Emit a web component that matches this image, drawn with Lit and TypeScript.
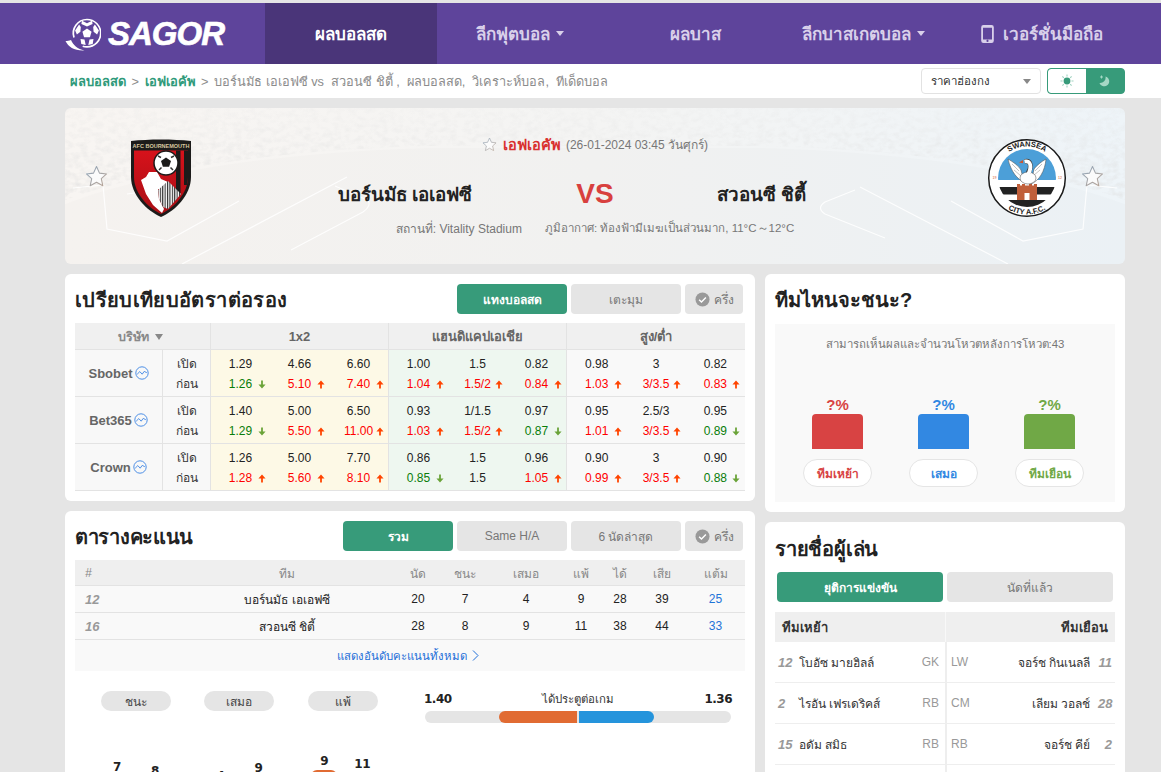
import { LitElement, html, css, svg } from "lit";
import { customElement } from "lit/decorators.js";

type Odd = [string, ("u" | "d" | "")?];
const parse = (s: string): Odd[] => s.split(" ").map((t) => {
  const m = t.slice(-1);
  return m === "u" || m === "d" ? [t.slice(0, -1), m] : [t, ""];
});
const ODDS = [
  { name: "Sbobet", open: "1.29 4.66 6.60|1.00 1.5 0.82|0.98 3 0.82", now: "1.26d 5.10u 7.40u|1.04u 1.5/2u 0.84u|1.03u 3/3.5u 0.83u" },
  { name: "Bet365", open: "1.40 5.00 6.50|0.93 1/1.5 0.97|0.95 2.5/3 0.95", now: "1.29d 5.50u 11.00u|1.03u 1.5/2u 0.87d|1.01u 3/3.5u 0.89d" },
  { name: "Crown", open: "1.26 5.00 7.70|0.86 1.5 0.96|0.90 3 0.90", now: "1.28u 5.60u 8.10u|0.85d 1.5 1.05u|0.99u 3/3.5u 0.88d" },
];
const GROUP_CLASS = ["g1", "g2", "g3"];
const STAND_HEAD = ["#", "ทีม", "นัด", "ชนะ", "เสมอ", "แพ้", "ได้", "เสีย", "แต้ม"];
const STAND = [
  ["12", "บอร์นมัธ เอเอฟซี", "20", "7", "4", "9", "28", "39", "25"],
  ["16", "สวอนซี ชิตี้", "28", "8", "9", "11", "38", "44", "33"],
];
const CHART = [
  { label: "ชนะ", a: 7, b: 8 },
  { label: "เสมอ", a: 4, b: 9 },
  { label: "แพ้", a: 9, b: 11 },
];
const PLAYERS = [
  ["12", "โบอัซ มายฮิลล์", "GK", "LW", "จอร์ช กินเนลลี", "11"],
  ["2", "ไรอัน เฟรเดริคส์", "RB", "CM", "เลียม วอลช์", "28"],
  ["15", "อดัม สมิธ", "RB", "RB", "จอร์ช คีย์", "2"],
  ["", "", "", "", "", ""],
];

const star = (cls: string) => html`<svg class=${cls} viewBox="0 0 24 24"><defs><linearGradient id="sg" x1="0" y1="0" x2="1" y2="1"><stop offset="0" stop-color="#8fa6bc"/><stop offset="1" stop-color="#b9a494"/></linearGradient></defs><path d="M12 1.6l3.1 6.900 7.400.8-5.500 5 1.600 7.400L12 18l-6.600 3.700L7 14.300l-5.500-5 7.400-.8z" fill="#fbfbfb" stroke="url(#sg)" stroke-width="1.100" stroke-linejoin="round"/></svg>`;
const check = html`<svg class="chk" viewBox="0 0 16 16"><circle cx="8" cy="8" r="7.500" fill="#999"/><path d="M4.400 8.200l2.500 2.400 4.700-4.800" fill="none" stroke="#fff" stroke-width="1.500"/></svg>`;
const trend = html`<svg class="trend" viewBox="0 0 14 14"><circle cx="7" cy="7" r="6.200" fill="none" stroke="#4d8fe6" stroke-width="1"/><path d="M2.200 8.200l2.600-2.600 2.400 2.600 2-2.800 2.600 1.300" fill="none" stroke="#4d8fe6" stroke-width="1"/></svg>`;
const arrow = (d: string) => html`<svg class="arr ${d}" viewBox="0 0 9 10">${d === "u"
  ? svg`<path d="M4.500 0.500L8.500 5H5.500v4.500h-2V5H.5z" fill="#ff4400"/>`
  : svg`<path d="M4.500 9.500L8.500 5H5.500V.5h-2V5H.5z" fill="#6aa338"/>`}</svg>`;

const logoBall = html`<svg class="ball" viewBox="0 0 36 33">
  <path d="M22 1.500a13.700 13.700 0 0 1 0 27.400c-1.500 0-3-.2-4.300-.7" fill="none" stroke="#fff" stroke-width="1.700"/>
  <path d="M22 1.500A13.700 13.700 0 0 0 9 19.500" fill="none" stroke="#fff" stroke-width="1.700"/>
  <path d="M22 10.500l4.600 3.300-1.700 5.400h-5.800l-1.700-5.400z" fill="#fff"/>
  <path d="M17 2.800l5 2.400 5-2.400 .6 3.200-5.600 2.600-5.600-2.600zM29.900 6.600l4 6-1.800 3.800-3.500-2.700-.4-4.600zM14.100 6.600l-4 6 1.800 3.800 3.500-2.700.4-4.600zM15.500 21l4 .6 1.200 5.400-4.400-1zM28.500 21l-4 .6-1.200 5.400 4.400-1z" fill="#fff"/>
  <path d="M.5 23c3 6 9 10 19 9.500-7-1.500-11-5-13.500-10.500-2 .8-3.500 1-5.500 1z" fill="#fff"/>
</svg>`;

const heroBg = html`<svg class="herobg" viewBox="0 0 1060 156" preserveAspectRatio="none">
  <defs>
    <linearGradient id="hb" x1="0" x2="1" y1="0" y2="0"><stop offset="0" stop-color="#f8f5f2"/><stop offset=".5" stop-color="#f4f4f3"/><stop offset="1" stop-color="#eef4f8"/></linearGradient>
    <filter id="crowd" x="0" y="0" width="100%" height="100%"><feTurbulence type="fractalNoise" baseFrequency=".13 .2" numOctaves="2" seed="4"/><feColorMatrix values="0 0 0 0 .72  0 0 0 0 .72  0 0 0 0 .72  1.600 0 0 0 -.62"/><feGaussianBlur stdDeviation=".7"/></filter>
    <linearGradient id="fade" x1="0" x2="0" y1="0" y2="1"><stop offset="0" stop-color="#fff" stop-opacity=".25"/><stop offset="1" stop-color="#fff" stop-opacity="1"/></linearGradient>
    <mask id="cm"><path d="M0 0H1060V92C980 62 850 42 700 38H360C210 42 80 62 0 92z" fill="url(#fade)"/></mask>
  </defs>
  <rect width="1060" height="156" fill="url(#hb)"/>
  <rect width="1060" height="100" filter="url(#crowd)" mask="url(#cm)" opacity=".8"/>
  <path d="M0 96C90 62 220 44 360 40H700C840 44 970 62 1060 96V156H0z" fill="#000" opacity=".012"/>
  <g fill="none" stroke="#fff" stroke-width="1.200" opacity=".85">
    <path d="M117 156L282 69"/><path d="M943 156L795 79"/>
    <path d="M270 78l32 14c4 3 2 8-4 12l-72 38"/><path d="M790 82l-30 12c-6 4-6 8 0 12l60 24"/>
    <path d="M8 80l30-3 4 44 60 12 72-40"/><path d="M1052 80l-30-3-4 44-60 12-72-40"/>
    <path d="M62 86l30-4M998 86l-30-4"/>
  </g>
</svg>`;

const bournemouth = html`<svg class="crest1" viewBox="0 0 60 78">
  <defs><linearGradient id="rg" x1="0" y1="0" x2="0" y2="1"><stop offset="0" stop-color="#d8121b"/><stop offset="1" stop-color="#a50e14"/></linearGradient>
  <clipPath id="sh"><path d="M3 11.500H57V38C57 54 43 69 30 75C17 69 3 54 3 38z"/></clipPath>
  <pattern id="hatch" width="2.400" height="2.400" patternUnits="userSpaceOnUse"><rect width="2.400" height="2.400" fill="#fff"/><rect width="1.100" height="2.400" fill="#2a2a2a"/></pattern></defs>
  <path d="M0 2C18 0 42 0 60 2V38C60 56 44 72 30 78C16 72 0 56 0 38z" fill="#1c1b1a"/>
  <text x="30" y="9" text-anchor="middle" font-size="5.500" font-weight="700" font-family="Liberation Sans, sans-serif" fill="#d8c9a0">AFC BOURNEMOUTH</text>
  <g clip-path="url(#sh)">
    <rect y="10" width="60" height="70" fill="url(#rg)"/>
    <rect x="45" y="10" width="4.500" height="46" fill="#1c1b1a"/><rect x="53" y="10" width="4.500" height="36" fill="#1c1b1a"/>
    <path d="M10 41L15 38 18 33 26 33 30 40 37 43 34 50 27 50 28 60 33 70 31 74 22 66 15 55z" fill="#fff"/>
    <path d="M27 51L37 42 50 55 37 70 32 68 28 60z" fill="url(#hatch)"/>
  </g>
  <circle cx="35" cy="24" r="12" fill="#fff" stroke="#1c1b1a" stroke-width="1.500"/>
  <path d="M35 18.500l5 3.600-1.900 5.700h-6.200l-1.900-5.700z" fill="#1c1b1a"/>
  <path d="M27 17l3 1.500M43 17l-3 1.500M28 31l2.500-2.500M42 31l-2.500-2.500" stroke="#333" stroke-width="1.500"/>
</svg>`;

const swansea = html`<svg class="crest2" viewBox="0 0 80 80">
  <defs><path id="arcT" d="M8.500 40a31.500 31.500 0 0 1 63 0"/><path id="arcB" d="M3.500 40a36.500 36.500 0 0 0 73 0"/>
  <clipPath id="inn"><circle cx="40" cy="40" r="29"/></clipPath></defs>
  <circle cx="40" cy="40" r="38.300" fill="#fff" stroke="#1b1b1b" stroke-width="1.500"/>
  <g clip-path="url(#inn)">
    <rect x="10" y="10" width="60" height="32" fill="#4c9fd8"/>
    <rect x="10" y="49" width="60" height="7.500" fill="#222"/>
    <rect x="10" y="62" width="60" height="8" fill="#222"/>
  </g>
  <rect x="30" y="48" width="20" height="14" fill="#fff"/>
  <path d="M30 46h3v1.500h2V46h3v1.500h4V46h3v1.500h2V46h3v16H30z" fill="#c05f3a"/>
  <rect x="37.500" y="55" width="5" height="7" fill="#fff"/>
  <path d="M21 21C26 24 31 27 34 32L37 44C31 42 24 34 21 21z" fill="#fff" stroke="#444" stroke-width=".5"/>
  <path d="M59 21C54 24 50 27 47 31L44 46C52 43 58 33 59 21z" fill="#fff" stroke="#444" stroke-width=".5"/>
  <path d="M25 26l7 7M27 32l7 6M55 26l-7 7M53 32l-7 6" stroke="#999" stroke-width=".6"/>
  <ellipse cx="41" cy="40" rx="8" ry="6" fill="#fff" stroke="#444" stroke-width=".5"/>
  <path d="M37.500 23.500C44 22 45 29 41 35" fill="none" stroke="#444" stroke-width="4.800"/>
  <path d="M37.500 23.500C44 22 45 29 41 37" fill="none" stroke="#fff" stroke-width="3.800"/>
  <path d="M36 22l-4 2.500 4 .8z" fill="#d0552b"/>
  <text font-size="7.500" font-weight="700" font-family="Liberation Sans, sans-serif" fill="#1b1b1b"><textPath href="#arcT" startOffset="50%" text-anchor="middle">SWANSEA</textPath></text>
  <text font-size="7.500" font-weight="700" font-family="Liberation Sans, sans-serif" fill="#1b1b1b"><textPath href="#arcB" startOffset="50%" text-anchor="middle">CITY A.F.C.</textPath></text>
  <text x="5.500" y="41" font-size="3.500" font-family="Liberation Sans, sans-serif" fill="#d0552b">19</text>
  <text x="71" y="41" font-size="3.500" font-family="Liberation Sans, sans-serif" fill="#d0552b">12</text>
</svg>`;

@customElement("app-root")
export class AppRoot extends LitElement {
  static styles = css`
    :host { display: block; height: 772px; overflow: hidden; background: #e5e5e5; font-family: "Liberation Sans", Tahoma, sans-serif; font-size: 12px; color: #333; padding-top: 3px; box-sizing: border-box; }
    * { box-sizing: border-box; }
    .nav { height: 61px; background: #5e449b; display: flex; padding-left: 65px; }
    .logo { width: 200px; display: flex; align-items: center; }
    .ball { width: 36px; height: 33px; margin-top: 1px; }
    .logotxt { color: #fff; font: italic 700 33px "Liberation Sans", sans-serif; letter-spacing: -1px; margin-left: 7px; -webkit-text-stroke: .6px #fff; }
    .navitem { width: 172px; display: flex; align-items: center; justify-content: center; gap: 5px; color: #d9d0ea; font-size: 17px; font-weight: 700; }
    .navitem.on { background: #4a3579; color: #fff; }
    .navitem.drop { padding-right: 7px; }
    .navitem.mob { padding-left: 5px; }
    .caret { width: 0; height: 0; border: 4px solid transparent; border-top: 5px solid #d9d0ea; border-bottom: 0; margin-left: 1px; }
    .phone { width: 13px; height: 18px; margin-right: 4px; }
    .crumb { height: 34px; background: #fff; padding: 0 36px 0 70px; display: flex; align-items: center; color: #8c8c8c; font-size: 12.770px; }
    .crumb b { color: #2f9a7a; font-weight: 700; font-size: 13px; }
    .crumb em { font-style: normal; margin: 0 2px; }
    .crumb .txt { flex: 1; white-space: pre; }
    .sel { width: 120px; height: 26px; border: 1px solid #e2e2e2; border-radius: 4px; display: flex; align-items: center; justify-content: space-between; padding: 0 9px; color: #333; font-size: 11.500px; }
    .sel i { width: 0; height: 0; border: 4px solid transparent; border-top: 5px solid #888; border-bottom: 0; }
    .toggle { width: 78px; height: 26px; margin-left: 6px; border-radius: 4px; border: 1px solid #379b7a; background: #379b7a; display: flex; overflow: hidden; }
    .toggle span { flex: 1; display: flex; align-items: center; justify-content: center; }
    .toggle span:first-child { background: #fff; border-radius: 3px 0 0 3px; flex: 0 0 38px; }
    .toggle svg { width: 14px; height: 14px; }

    .wrap { width: 1060px; margin-left: 65px; padding-top: 10px; display: flex; flex-direction: column; gap: 10px; }
    .hero { height: 156px; border-radius: 6px; overflow: hidden; position: relative; display: flex; align-items: center; }
    .herobg { position: absolute; inset: 0; width: 100%; height: 100%; }
    .herocol { position: relative; display: flex; align-items: center; width: 140px; height: 100%; flex: none; }
    .herostar { width: 23px; height: 23px; }
    .side1 { padding: 0 0 20px 20px; gap: 23px; }
    .side2 { padding: 0 21px 20px 0; justify-content: flex-end; gap: 14px; }
    .crest1 { width: 60px; height: 78px; margin-top: 3px; flex: none; }
    .crest2 { width: 80px; height: 80px; margin-top: 3px; flex: none; }
    .mid { position: relative; flex: 1; height: 100%; display: flex; flex-direction: column; align-items: center; }
    .meta { margin-top: 27px; display: flex; align-items: center; color: #777; gap: 5px; height: 18px; }
    .meta .st { width: 15px; height: 15px; margin-right: 1px; }
    .meta b { color: #d9302e; font-size: 14.600px; font-weight: 700; }
    .teams { display: grid; grid-template-columns: 1fr 104px 1fr; align-items: center; margin-top: 21px; height: 40px; width: 586px; }
    .teams .h { font-size: 18.800px; font-weight: 700; color: #222; text-align: right; padding-right: 71px; white-space: nowrap; }
    .teams .vs { font-size: 28px; font-weight: 700; color: #d8403e; text-align: center; }
    .teams .a { font-size: 18.800px; font-weight: 700; color: #222; padding-left: 70px; white-space: nowrap; }
    .info { margin-top: 5px; display: flex; gap: 23px; color: #777; white-space: nowrap; }
    .info .wx { font-size: 11.500px; }

    .cols { display: grid; grid-template-columns: 690px 360px; gap: 10px; }
    .col { display: flex; flex-direction: column; gap: 10px; }
    .panel { background: #fff; border-radius: 6px; padding: 10px; }
    .head { display: flex; align-items: center; justify-content: space-between; height: 30px; padding-right: 2px; }
    h2 { margin: 0; padding-top: 1px; font-size: 20px; font-weight: 700; color: #222; }
    h2.wide { letter-spacing: .35px; }
    h2.tight { letter-spacing: -.3px; }
    h2.tighter { letter-spacing: -.2px; padding: 0 0 6px; }
    .tabs { display: flex; gap: 4px; }
    .tab { width: 110px; height: 30px; border-radius: 4px; background: #e5e5e5; color: #777; display: flex; align-items: center; justify-content: center; gap: 4px; }
    .tab.on { background: #379b7a; color: #fff; font-weight: 700; }
    .tab.half { width: 58px; }
    .chk { width: 15px; height: 15px; }

    .otable { margin-top: 9px; }
    .orow { display: grid; grid-template-columns: 87px 48px 178px 178px 179px; border-bottom: 1px solid #e3e3e3; }
    .ohead { height: 27px; background: #f0f0f0; color: #666; font-weight: 700; font-size: 13px; }
    .ohead > div { display: flex; align-items: center; justify-content: center; border-left: 1px solid #e3e3e3; padding-top: 1px; }
    .ohead .co { grid-column: span 2; border-left: 0; color: #888; font-size: 12.500px; gap: 6px; padding-right: 5px; }
    .ohead .co i { width: 0; height: 0; border: 4.500px solid transparent; border-top: 6px solid #888; border-bottom: 0; }
    .obody { height: 47px; }
    .cname { background: #f8f8f8; display: flex; align-items: center; justify-content: center; gap: 2px; font-size: 13px; font-weight: 700; color: #666; }
    .trend { width: 14px; height: 14px; }
    .lab { border-left: 1px solid #e3e3e3; background: #f8f8f8; display: grid; grid-template-rows: 20px 20px; align-content: center; justify-items: center; align-items: center; color: #333; }
    .grp { border-left: 1px solid #e3e3e3; display: grid; grid-template-columns: repeat(3, 1fr); grid-template-rows: 20px 20px; align-content: center; padding-top: 2px; }
    .g1 { background: #fdf9e6; } .g2 { background: #eef7f0; } .g3 { background: #f9f9f9; }
    .v { position: relative; text-align: center; line-height: 20px; color: #222; }
    .v.u { color: #f00; } .v.d { color: #0a7d0a; }
    .arr { position: absolute; left: calc(50% + 17px); top: 6px; width: 8px; height: 9px; }

    .vote { margin-top: 10px; height: 178px; background: #f9f9f9; padding-top: 13px; display: flex; flex-direction: column; align-items: center; }
    .vote p { margin: 0; color: #777; line-height: 14px; font-size: 11.400px; }
    .vgrid { margin: 45px 3px 0 0; display: grid; grid-template-columns: repeat(3, 106px); }
    .vc { display: flex; flex-direction: column; align-items: center; }
    .vc b { font-size: 15px; line-height: 17px; height: 18px; }
    .vc .bar { width: 51px; height: 35px; border-radius: 4px 4px 0 0; }
    .pill { margin-top: 10px; width: 69px; height: 28px; border-radius: 14px; background: #fff; border: 1px solid #e5e5e5; display: flex; align-items: center; justify-content: center; font-weight: 700; }
    .c1 { color: #d84343; } .c2 { color: #3288e2; } .c3 { color: #70a846; }
    .b1 { background: #d84343; } .b2 { background: #3288e2; } .b3 { background: #70a846; }

    .stable { margin-top: 9px; }
    .srow { display: grid; grid-template-columns: 101px 222px 40px 54px 68px 42px 36px 48px 59px; align-items: center; text-align: center; height: 27px; background: #f9f9f9; border-bottom: 1px solid #e3e3e3; color: #222; }
    .srow.hd { height: 26px; background: #efefef; color: #888; padding-top: 1px; }
    .srow > :first-child { text-align: left; padding-left: 10px; font-style: italic; }
    .srow .rk { font-weight: 700; font-size: 13px; color: #999; }
    .srow .pts { color: #1e74d8; }
    .more { height: 31px; background: #f9f9f9; color: #1e6fd8; display: flex; align-items: center; justify-content: center; gap: 5px; font-size: 11.400px; padding-right: 4px; }
    .more svg { width: 7px; height: 11px; }
    .cmp { display: flex; margin-top: 20px; }
    .chart { margin-left: 9px; width: 311px; display: grid; grid-template-columns: repeat(3, 1fr); }
    .cg { display: flex; flex-direction: column; align-items: center; }
    .lg { width: 70px; height: 20px; border-radius: 10px; background: #e5e5e5; display: flex; align-items: center; justify-content: center; color: #444; }
    .bars { height: 86px; display: flex; align-items: flex-end; justify-content: center; gap: 12px; }
    .bc { width: 26px; display: flex; flex-direction: column; align-items: center; font: 700 12px "DejaVu Sans", sans-serif; letter-spacing: -.5px; color: #222; }
    .bc i { display: block; width: 26px; border-radius: 6px 6px 0 0; margin-top: 2px; }
    .ba { background: #e16b32; } .bb { background: #2594dc; }
    .rates { margin-left: 30px; width: 306px; display: flex; flex-direction: column; }
    .rt { display: flex; justify-content: space-between; align-items: center; height: 20px; padding-bottom: 5px; color: #333; font-size: 11.400px; margin: 0 -1px; }
    .rt b { font: 700 12px "DejaVu Sans", sans-serif; letter-spacing: -.5px; color: #222; }
    .gb { height: 12px; border-radius: 6px; background: #e5e5e5; display: flex; justify-content: center; gap: 2px; overflow: hidden; }
    .gb i { display: block; height: 12px; }
    .gb .l { width: 78px; background: #e16b32; border-radius: 6px 0 0 6px; }
    .gb .r { width: 75px; background: #2594dc; border-radius: 0 6px 6px 0; margin-right: 3px; }
    .rt2 { margin-top: 47px; text-align: center; color: #333; }

    .phead { height: 40px; display: flex; align-items: center; }
    .ptabs { display: flex; gap: 4px; padding: 0 2px; }
    .ptabs .tab { width: 166px; }
    .ptable { margin-top: 10px; }
    .prow { display: grid; grid-template-columns: 170px 170px; }
    .prow.hd { height: 30px; background: #efefef; font-weight: 700; color: #333; font-size: 13px; }
    .prow > div { display: flex; align-items: center; border-bottom: 1px solid #eee; height: 41px; }
    .prow.hd > div { height: 30px; border-bottom: 0; padding: 0 7px; }
    .prow > div:last-child { border-left: 2px solid #eee; }
    .prow.hd > div:last-child { justify-content: flex-end; border-left: 1px solid #f8f8f8; }
    .nm { font-weight: 700; font-style: italic; color: #999; font-size: 13px; }
    .pl { padding-left: 3px; padding-right: 6px; }
    .pl .nm { width: 21px; }
    .pl .n { flex: 1; color: #333; white-space: nowrap; }
    .pos { color: #999; }
    .pr { padding-left: 4px; padding-right: 3px; }
    .pr .n { flex: 1; text-align: right; color: #333; white-space: nowrap; padding-right: 8px; }
    .pr .nm { width: 14px; text-align: right; }
  `;

  private group(open: string, now: string) {
    const o = open.split("|").map(parse);
    const n = now.split("|").map(parse);
    return o.map((g, i) => html`<div class="grp ${GROUP_CLASS[i]}">
      ${g.map((c) => html`<div class="v">${c[0]}</div>`)}
      ${n[i].map((c) => html`<div class="v ${c[1]}">${c[0]}${c[1] ? arrow(c[1]) : ""}</div>`)}
    </div>`);
  }

  render() {
    return html`
      <div class="nav">
        <div class="logo">${logoBall}<span class="logotxt">SAGOR</span></div>
        <div class="navitem on">ผลบอลสด</div>
        <div class="navitem drop">ลีกฟุตบอล<i class="caret"></i></div>
        <div class="navitem">ผลบาส</div>
        <div class="navitem drop">ลีกบาสเกตบอล<i class="caret"></i></div>
        <div class="navitem mob"><svg class="phone" viewBox="0 0 14 20"><path fill-rule="evenodd" d="M2.500 0h9A2.500 2.500 0 0 1 14 2.500v15a2.500 2.500 0 0 1-2.500 2.500h-9A2.500 2.500 0 0 1 0 17.500v-15A2.500 2.500 0 0 1 2.500 0zM2 3v13h10V3zm5 13.500a1.200 1.200 0 1 0 0 2.400 1.200 1.200 0 0 0 0-2.400z" fill="#d9d0ea"/></svg>เวอร์ชั่นมือถือ</div>
      </div>
      <div class="crumb">
        <div class="txt"><b>ผลบอลสด</b> <em>&gt;</em> <b>เอฟเอคัพ</b> <em>&gt;</em> บอร์นมัธ เอเอฟซี vs  สวอนซี ชิตี้ ,  ผลบอลสด,  วิเคราะห์บอล,  ทีเด็ดบอล</div>
        <div class="sel">ราคาฮ่องกง<i></i></div>
        <div class="toggle">
          <span><svg viewBox="0 0 14 14"><circle cx="7" cy="7" r="3.400" fill="#379b7a"/><path d="M7 .5v2M7 11.500v2M.5 7h2M11.500 7h2M2.400 2.400l1.400 1.400M10.200 10.200l1.400 1.400M2.400 11.600l1.400-1.400M10.200 3.800l1.400-1.400" stroke="#9fd2c0" stroke-width="1.100"/></svg></span>
          <span><svg viewBox="0 0 14 14"><path d="M7.500 2.500a5 5 0 1 1-6 6.500 5.500 5.500 0 0 0 6-6.500z" fill="#a5d8c5"/><path d="M3.500 1.500v3M2 3h3" stroke="#a5d8c5" stroke-width="1"/></svg></span>
        </div>
      </div>
      <div class="wrap">
        <div class="hero">
          ${heroBg}
          <div class="herocol side1">${star("herostar")}${bournemouth}</div>
          <div class="mid">
            <div class="meta">${star("st")}<b>เอฟเอคัพ</b> (26-01-2024 03:45 วันศุกร์)</div>
            <div class="teams"><div class="h">บอร์นมัธ เอเอฟซี</div><div class="vs">VS</div><div class="a">สวอนซี ชิตี้</div></div>
            <div class="info"><span>สถานที่: Vitality Stadium</span><span class="wx">ภูมิอากาศ: ท้องฟ้ามีเมฆเป็นส่วนมาก, 11°C～12°C</span></div>
          </div>
          <div class="herocol side2">${swansea}${star("herostar")}</div>
        </div>
        <div class="cols">
          <div class="col">
            <section class="panel">
              <div class="head"><h2 class="wide">เปรียบเทียบอัตราต่อรอง</h2>
                <div class="tabs"><div class="tab on">แทงบอลสด</div><div class="tab">เตะมุม</div><div class="tab half">${check}ครึ่ง</div></div>
              </div>
              <div class="otable">
                <div class="orow ohead"><div class="co">บริษัท<i></i></div><div>1x2</div><div>แฮนดิแคปเอเชีย</div><div>สูง/ต่ำ</div></div>
                ${ODDS.map((r) => html`<div class="orow obody">
                  <div class="cname">${r.name}${trend}</div>
                  <div class="lab"><span>เปิด</span><span>ก่อน</span></div>
                  ${this.group(r.open, r.now)}
                </div>`)}
              </div>
            </section>
            <section class="panel">
              <div class="head"><h2 class="tight">ตารางคะแนน</h2>
                <div class="tabs"><div class="tab on">รวม</div><div class="tab">Same H/A</div><div class="tab">6 นัดล่าสุด</div><div class="tab half">${check}ครึ่ง</div></div>
              </div>
              <div class="stable">
                <div class="srow hd">${STAND_HEAD.map((h) => html`<div>${h}</div>`)}</div>
                ${STAND.map((r) => html`<div class="srow">${r.map((c, i) => html`<div class=${i === 0 ? "rk" : i === 8 ? "pts" : ""}>${c}</div>`)}</div>`)}
                <div class="more">แสดงอันดับคะแนนทั้งหมด <svg viewBox="0 0 7 11"><path d="M1 .5l5 5-5 5" fill="none" stroke="#1e6fd8"/></svg></div>
              </div>
              <div class="cmp">
                <div class="chart">
                  ${CHART.map((c) => html`<div class="cg"><div class="lg">${c.label}</div>
                    <div class="bars">
                      <div class="bc">${c.a}<i class="ba" style="height:${Math.round((c.a / 20) * 61)}px"></i></div>
                      <div class="bc">${c.b}<i class="bb" style="height:${Math.round((c.b / 28) * 61)}px"></i></div>
                    </div></div>`)}
                </div>
                <div class="rates">
                  <div class="rt"><b>1.40</b><span>ได้ประตูต่อเกม</span><b>1.36</b></div>
                  <div class="gb"><i class="l"></i><i class="r"></i></div>
                  <div class="rt2">เสียประตูต่อเกม</div>
                </div>
              </div>
            </section>
          </div>
          <div class="col">
            <section class="panel">
              <div class="head"><h2>ทีมไหนจะชนะ?</h2></div>
              <div class="vote">
                <p>สามารถเห็นผลและจำนวนโหวตหลังการโหวต:43</p>
                <div class="vgrid">
                  ${[["ทีมเหย้า", 1], ["เสมอ", 2], ["ทีมเยือน", 3]].map(([t, i]) => html`<div class="vc">
                    <b class="c${i}">?%</b><div class="bar b${i}"></div><div class="pill c${i}">${t}</div></div>`)}
                </div>
              </div>
            </section>
            <section class="panel">
              <div class="phead"><h2 class="tighter">รายชื่อผู้เล่น</h2></div>
              <div class="ptabs"><div class="tab on">ยุติการแข่งขัน</div><div class="tab">นัดที่แล้ว</div></div>
              <div class="ptable">
                <div class="prow hd"><div>ทีมเหย้า</div><div>ทีมเยือน</div></div>
                ${PLAYERS.map((p) => html`<div class="prow">
                  <div class="pl"><span class="nm">${p[0]}</span><span class="n">${p[1]}</span><span class="pos">${p[2]}</span></div>
                  <div class="pr"><span class="pos">${p[3]}</span><span class="n">${p[4]}</span><span class="nm">${p[5]}</span></div>
                </div>`)}
              </div>
            </section>
          </div>
        </div>
      </div>
    `;
  }
}
